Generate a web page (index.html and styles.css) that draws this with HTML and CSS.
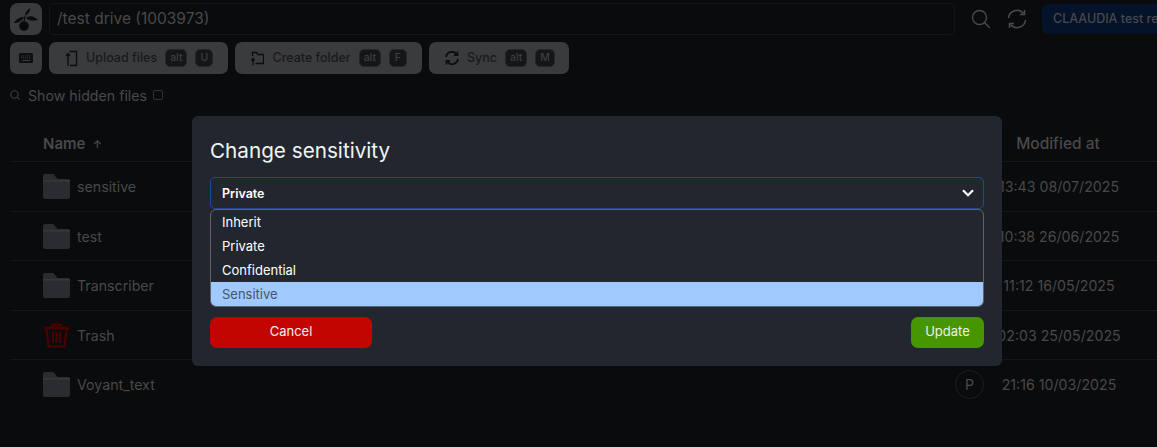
FILE: index.html
```html
<!DOCTYPE html>
<html lang="en">
<head>
  <meta charset="utf-8">
  <title>test drive</title>
  <link rel="stylesheet" href="styles.css">
</head>
<body>
  <svg class="defs" width="0" height="0">
    <defs>
      <symbol id="folder" viewBox="0 0 27 25">
        <path d="M0 2a2 2 0 0 1 2-2h8.500l4 5H25a2 2 0 0 1 2 2v16a2 2 0 0 1-2 2H2a2 2 0 0 1-2-2z" fill="#2a2c2f"/>
        <path d="M0 6h27v1.500H0z" fill="#36383b"/>
      </symbol>
    </defs>
  </svg>

  <div class="page">
    <header class="topbar">
      <a class="logo">
        <svg width="30" height="30" viewBox="0 0 30 30">
          <path d="M19 4c.5 3-2 6-5 8 0-3 2-6 5-8z" fill="#0a0b0d"/>
          <path d="M15 14c4-3 8-2 12 2-4 1-9 1-12-2z" fill="#0a0b0d"/>
          <path d="M13 13c-4 0-8 2-10 6 4 0 8-2 10-6z" fill="#0a0b0d"/>
          <path d="M14 12l-1 6" stroke="#0a0b0d" stroke-width="1.200"/>
          <circle cx="13" cy="22" r="4.800" fill="#0a0b0d"/>
        </svg>
      </a>
      <div class="path-box">/test drive (1003973)</div>
      <svg class="top-icon" width="20" height="20" viewBox="0 0 20 20" fill="none" stroke="#4a4b4d" stroke-width="1.400">
        <circle cx="8.500" cy="8.500" r="7"/>
        <path d="M13.700 13.700l5 5"/>
      </svg>
      <svg class="top-icon" width="20" height="20" viewBox="0 0 20 20" fill="none" stroke="#4a4b4d" stroke-width="1.500">
        <path d="M1.500 9A8.500 8.500 0 0 1 16.500 4.500"/>
        <path d="M18.500 11A8.500 8.500 0 0 1 3.500 15.500"/>
        <path d="M17.500 1v4.500H13"/>
        <path d="M2.500 19v-4.500H7"/>
      </svg>
      <div class="project-tab">CLAAUDIA test research</div>
    </header>

    <div class="toolbar">
      <button class="btn btn-square">
        <svg width="14" height="10" viewBox="0 0 14 10">
          <rect width="14" height="10" rx="1.500" fill="#0e0f11"/>
          <path d="M2 3h10M2 5h10" stroke="#3a3b3d" stroke-dasharray="1 1"/>
          <path d="M3 7.500h8" stroke="#3a3b3d"/>
        </svg>
      </button>
      <button class="btn">
        <svg width="13" height="17" viewBox="0 0 12 17" fill="none" stroke="#0c0d0f" stroke-width="1.300">
          <path d="M4 1.500h7v14H4.500"/>
          <path d="M2.500 16V4M.5 6l2-2.500L4.500 6"/>
        </svg>
        <span class="btn-label">Upload files</span>
        <kbd>alt</kbd><kbd>U</kbd>
      </button>
      <button class="btn">
        <svg width="13" height="15" viewBox="0 0 13 15" fill="none" stroke="#0c0d0f" stroke-width="1.300">
          <path d="M1.500 5V1.500h4l1.500 2h5.500v9H4.500"/>
          <path d="M2 14.500V8M.5 9.500L2 7.500l1.500 2"/>
        </svg>
        <span class="btn-label">Create folder</span>
        <kbd>alt</kbd><kbd>F</kbd>
      </button>
      <button class="btn btn-sync">
        <svg width="14" height="14" viewBox="0 0 14 14" fill="none" stroke="#0c0d0f" stroke-width="1.800">
          <path d="M1 6a6 6 0 0 1 10.500-3"/>
          <path d="M13 8a6 6 0 0 1-10.500 3"/>
          <path d="M12.500 .5v3.500H9"/>
          <path d="M1.500 13.500V10H5"/>
        </svg>
        <span class="btn-label">Sync</span>
        <kbd>alt</kbd><kbd>M</kbd>
      </button>
    </div>

    <div class="hidden-row">
      <svg width="10" height="10" viewBox="0 0 9 9" fill="none" stroke="#3c3d3f">
        <circle cx="4" cy="4" r="3.300"/>
        <path d="M6.500 6.500l2.200 2.200"/>
      </svg>
      <span>Show hidden files</span>
      <i class="check"></i>
    </div>

    <div class="file-table">
      <div class="row row-head">
        <span class="name">Name <em>↑</em></span>
        <span class="modified">Modified at</span>
      </div>
      <div class="row">
        <span class="name"><svg class="row-icon"><use href="#folder"/></svg>sensitive</span>
        <span class="modified">13:43 08/07/2025</span>
      </div>
      <div class="row">
        <span class="name"><svg class="row-icon"><use href="#folder"/></svg>test</span>
        <span class="modified">10:38 26/06/2025</span>
      </div>
      <div class="row">
        <span class="name"><svg class="row-icon"><use href="#folder"/></svg>Transcriber</span>
        <span class="modified">11:12 16/05/2025</span>
      </div>
      <div class="row">
        <span class="name">
          <svg class="row-icon" viewBox="0 0 27 25" fill="none" stroke="#4c0000" stroke-width="2.200">
            <path d="M1 5h25" stroke-width="3"/>
            <path d="M9.500 4V1.500h8V4"/>
            <path d="M3.500 6l2 17.500h16l2-17.500"/>
            <path d="M10 9v11M13.500 9v11M17 9v11"/>
          </svg>Trash
        </span>
        <span class="modified">02:03 25/05/2025</span>
      </div>
      <div class="row">
        <span class="name"><svg class="row-icon"><use href="#folder"/></svg>Voyant_text</span>
        <i class="sens-badge">P</i>
        <span class="modified">21:16 10/03/2025</span>
      </div>
    </div>
  </div>

  <div class="modal">
    <h2>Change sensitivity</h2>
    <div class="select">
      <span>Private</span>
      <svg width="12" height="8" viewBox="0 0 12 8" fill="none" stroke="#fff" stroke-width="2.200">
        <path d="M1 1.300l5 5 5-5"/>
      </svg>
    </div>
    <ul class="options">
      <li>Inherit</li>
      <li>Private</li>
      <li>Confidential</li>
      <li class="active">Sensitive</li>
    </ul>
    <div class="modal-actions">
      <button class="action cancel">Cancel</button>
      <button class="action update">Update</button>
    </div>
  </div>
</body>
</html>
```

FILE: styles.css
```css
* {
  box-sizing: border-box;
}

html, body {
  height: 100%;
}

body {
  margin: 0;
  overflow: hidden;
  position: relative;
  background: #0a0b0d;
  color: #48494b;
  font-family: Inter, sans-serif;
}

.defs {
  position: absolute;
}

.page {
  padding: 3px 0 0 10px;
}

/* top bar */
.topbar {
  display: flex;
  align-items: center;
  height: 32px;
  white-space: nowrap;
}

.logo {
  display: flex;
  align-items: center;
  justify-content: center;
  flex: none;
  width: 32px;
  height: 32px;
  border-radius: 8px;
  background: #3a3b3d;
}

.path-box {
  flex: none;
  width: 906px;
  height: 32px;
  margin-left: 7px;
  padding-left: 7px;
  border: 1px solid #141619;
  border-radius: 5px;
  font-size: 15.500px;
  line-height: 30px;
}

.top-icon {
  flex: none;
  margin-left: 16px;
}

.project-tab {
  flex: none;
  width: 150px;
  height: 30px;
  margin-left: 15px;
  padding-left: 11px;
  border-radius: 6px;
  background: #04122a;
  font-size: 12.500px;
  line-height: 30px;
  font-weight: 500;
}

/* toolbar */
.toolbar {
  display: flex;
  gap: 7px;
  margin-top: 7px;
}

.btn {
  display: flex;
  align-items: center;
  height: 32px;
  padding: 0 15px 0 16px;
  border: 0;
  border-radius: 7px;
  background: #3a3b3d;
  color: #18191b;
  font: 500 12.500px Inter, sans-serif;
}

.btn-square {
  width: 32px;
  padding: 0;
  justify-content: center;
}

.btn-sync {
  padding-right: 14px;
}

.btn-label {
  margin: -2px 0 0 8px;
}

kbd {
  display: block;
  height: 18px;
  min-width: 18px;
  margin-left: 8px;
  padding: 0 4px;
  border: 1px solid #252628;
  border-radius: 5px;
  background: #151618;
  color: #3e3f41;
  font: 500 10.500px/16px Inter, sans-serif;
  text-align: center;
}

/* hidden files */
.hidden-row {
  display: flex;
  align-items: center;
  height: 20px;
  margin-top: 11px;
  font-size: 14.200px;
}

.hidden-row span {
  margin-left: 8px;
}

.check {
  width: 10px;
  height: 10px;
  margin-left: 6px;
  border: 1px solid #303134;
  border-radius: 2px;
}

/* file list */
.file-table {
  margin-top: 21.300px;
  font-size: 14.200px;
}

.row {
  display: flex;
  align-items: center;
  height: 49.500px;
  padding: 0 25px 0 33px;
  border-bottom: 1px solid #141619;
}

.row-head {
  height: 36px;
  font-size: 15px;
  font-weight: 600;
}

.row:last-child {
  border-bottom-color: transparent;
}

.name {
  display: flex;
  align-items: center;
  flex: 1;
}

.name em {
  margin-left: 7px;
  font-size: 11px;
  font-style: normal;
}

.row-icon {
  flex: none;
  width: 27px;
  height: 25px;
  margin-right: 7px;
}

.modified {
  flex: none;
  width: 146px;
  text-align: center;
}

.row-head .modified {
  padding-right: 2px;
  font-size: 15.500px;
  font-weight: 500;
}

.sens-badge {
  display: block;
  width: 29px;
  height: 29px;
  margin-right: 2px;
  border: 1px solid #1d1f22;
  border-radius: 50%;
  font-style: normal;
  line-height: 27px;
  text-align: center;
}

/* modal */
.modal {
  position: absolute;
  top: 116px;
  left: 192px;
  width: 810px;
  height: 250px;
  padding: 18px;
  border-radius: 6px;
  background: #22272f;
  color: #fff;
}

.modal h2 {
  margin: 0 0 9px;
  font-size: 20.700px;
  line-height: 34px;
  font-weight: 400;
  color: #f2f3f4;
}

.select {
  display: flex;
  align-items: center;
  justify-content: space-between;
  height: 32px;
  padding: 0 9px 0 11px;
  border: 1px solid #1d4a97;
  border-radius: 5px;
  font-size: 12.500px;
  font-weight: 600;
}

.options {
  margin: 0;
  padding: 0;
  list-style: none;
  overflow: hidden;
  border: 1px solid #5f6369;
  border-radius: 6px;
  font-size: 13px;
  line-height: 24px;
}

.options li {
  padding-left: 11px;
}

.options .active {
  background: #a0c9ff;
  color: #4a5563;
}

.modal-actions {
  display: flex;
  justify-content: space-between;
  margin-top: 10px;
}

.action {
  height: 31px;
  padding: 0 0 3px;
  border: 0;
  border-radius: 7px;
  color: #f0f0f0;
  font: 400 13px Inter, sans-serif;
}

.cancel {
  width: 162px;
  background: #c30500;
}

.update {
  width: 73px;
  background: #479600;
}
```
